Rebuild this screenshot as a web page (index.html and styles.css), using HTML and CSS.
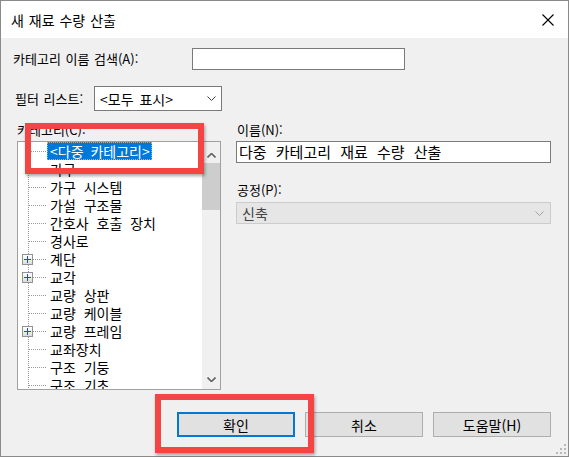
FILE: index.html
```html
<!DOCTYPE html>
<html lang="ko">
<head>
<meta charset="utf-8">
<title>새 재료 수량 산출</title>
<link rel="stylesheet" href="styles.css">
</head>
<body>
<div class="window">
  <div class="titlebar">
    <span class="title">새 재료 수량 산출</span>
    <svg class="close" width="12" height="12" viewBox="0 0 12 12"><path d="M0.5 0.5 L11.5 11.5 M11.5 0.5 L0.5 11.5" stroke="#000" stroke-width="1.1" fill="none"/></svg>
  </div>
  <div class="content">
    <div class="search-row">
      <label class="search-label">카테고리 이름 검색(A):</label>
      <div class="textbox search-box"></div>
    </div>
    <div class="filter-row">
      <label class="filter-label">필터 리스트:</label>
      <div class="combo">
        <span class="combo-text">&lt;모두 표시&gt;</span>
        <svg class="chev" width="9" height="5" viewBox="0 0 9 5"><path d="M0.5 0.5 L4.5 4.5 L8.5 0.5" stroke="#444" stroke-width="1" fill="none"/></svg>
      </div>
    </div>
    <div class="main">
      <div class="left-col">
        <div class="field-label">카테고리(C):</div>
        <div class="tree">
          <ul class="tree-list">
            <li class="row first"><span class="gutter"></span><span class="item selected">&lt;다중 카테고리&gt;</span></li>
            <li class="row"><span class="gutter"></span><span class="item">가구</span></li>
            <li class="row"><span class="gutter"></span><span class="item">가구 시스템</span></li>
            <li class="row"><span class="gutter"></span><span class="item">가설 구조물</span></li>
            <li class="row"><span class="gutter"></span><span class="item">간호사 호출 장치</span></li>
            <li class="row"><span class="gutter"></span><span class="item">경사로</span></li>
            <li class="row"><span class="gutter"><span class="plus"></span></span><span class="item">계단</span></li>
            <li class="row"><span class="gutter"><span class="plus"></span></span><span class="item">교각</span></li>
            <li class="row"><span class="gutter"></span><span class="item">교량 상판</span></li>
            <li class="row"><span class="gutter"></span><span class="item">교량 케이블</span></li>
            <li class="row"><span class="gutter"><span class="plus"></span></span><span class="item">교량 프레임</span></li>
            <li class="row"><span class="gutter"></span><span class="item">교좌장치</span></li>
            <li class="row"><span class="gutter"></span><span class="item">구조 기둥</span></li>
            <li class="row"><span class="gutter"></span><span class="item">구조 기초</span></li>
          </ul>
          <div class="scrollbar">
            <div class="sb-btn"><svg width="9" height="5" viewBox="0 0 9 5"><path d="M0.5 4.5 L4.5 0.5 L8.5 4.5" stroke="#606060" stroke-width="1.6" fill="none"/></svg></div>
            <div class="sb-track"><div class="sb-thumb"></div></div>
            <div class="sb-btn"><svg width="9" height="5" viewBox="0 0 9 5"><path d="M0.5 0.5 L4.5 4.5 L8.5 0.5" stroke="#606060" stroke-width="1.6" fill="none"/></svg></div>
          </div>
        </div>
      </div>
      <div class="right-col">
        <div class="field-label">이름(N):</div>
        <div class="textbox name-box">다중 카테고리 재료 수량 산출</div>
        <div class="field-label phase-label">공정(P):</div>
        <div class="combo disabled">
          <span class="combo-text">신축</span>
          <svg class="chev" width="9" height="5" viewBox="0 0 9 5"><path d="M0.5 0.5 L4.5 4.5 L8.5 0.5" stroke="#a0a0a0" stroke-width="1" fill="none"/></svg>
        </div>
      </div>
    </div>
    <div class="buttons">
      <button class="btn default">확인</button>
      <button class="btn">취소</button>
      <button class="btn">도움말(H)</button>
    </div>
    <svg class="grip" width="11" height="11" viewBox="0 0 11 11">
      <rect x="8" y="0" width="2" height="2" fill="#b8b8b8"/>
      <rect x="4" y="4" width="2" height="2" fill="#b8b8b8"/>
      <rect x="8" y="4" width="2" height="2" fill="#b8b8b8"/>
      <rect x="0" y="8" width="2" height="2" fill="#b8b8b8"/>
      <rect x="4" y="8" width="2" height="2" fill="#b8b8b8"/>
      <rect x="8" y="8" width="2" height="2" fill="#b8b8b8"/>
    </svg>
  </div>
  <div class="highlight hl-tree"></div>
  <div class="highlight hl-ok"></div>
</div>
</body>
</html>
```

FILE: styles.css
```css
* { box-sizing: border-box; }
html, body { margin: 0; padding: 0; }
body {
  width: 569px;
  height: 457px;
  overflow: hidden;
  font-family: "Noto Sans CJK KR", "Noto Sans", sans-serif;
  color: #000;
}
.window {
  position: relative;
  width: 569px;
  height: 457px;
  border: 1px solid #8a8a8a;
  display: flex;
  flex-direction: column;
  background: #f0f0f0;
}
.titlebar {
  height: 37px;
  background: #fff;
  display: flex;
  align-items: center;
  justify-content: space-between;
  padding: 0 14px 0 10px;
}
.title {
  font-size: 14px;
  line-height: 16px;
  word-spacing: 1px;
  margin-top: 1px;
}
.close { display: block; margin-top: 1px; }

.content {
  position: relative;
  flex: 1;
  padding: 10px 16px 0 12px;
  font-size: 13px;
}
.search-row {
  display: flex;
  align-items: center;
  height: 22px;
}
.search-label {
  width: 179px;
  line-height: 16px;
  word-spacing: 1px;
}
.textbox {
  background: #fff;
  border: 1px solid #7a7a7a;
  height: 22px;
}
.search-box { width: 213px; }

.filter-row {
  display: flex;
  align-items: center;
  margin-top: 16px;
  margin-left: 2px;
  height: 25px;
}
.filter-label {
  width: 79px;
  line-height: 16px;
  word-spacing: 1px;
}
.combo {
  width: 128px;
  height: 25px;
  border: 1px solid #7a7a7a;
  background: #fff;
  display: flex;
  align-items: center;
  justify-content: space-between;
  padding: 0 5px 0 5px;
  font-size: 14px;
}
.combo-text { line-height: 16px; word-spacing: 2px; }
.chev { display: block; }

.main {
  display: grid;
  grid-template-columns: 204px 315px;
  column-gap: 15px;
  margin-top: 10px;
  margin-left: 4px;
}
.field-label {
  height: 20px;
  line-height: 16px;
  padding-top: 1px;
}
.tree {
  height: 249px;
  border: 1px solid #a0a0a0;
  background: #fff;
  display: flex;
}
.tree-list {
  list-style: none;
  margin: 0;
  padding: 0;
  flex: 1;
  overflow: hidden;
  font-size: 14px;
  background-image: repeating-linear-gradient(to bottom, #9a9a9a 0 1px, transparent 1px 2px);
  background-size: 1px 100%;
  background-position: 10px 9px;
  background-repeat: no-repeat;
}
.row {
  height: 18px;
  display: flex;
  align-items: center;
  white-space: nowrap;
}
.gutter {
  width: 29px;
  height: 18px;
  flex: none;
  display: flex;
  align-items: center;
  background-image: repeating-linear-gradient(to right, #9a9a9a 0 1px, transparent 1px 2px);
  background-size: 17px 1px;
  background-position: 11px 9px;
  background-repeat: no-repeat;
}
.plus {
  width: 11px;
  height: 11px;
  margin-left: 4px;
  border: 1px solid #929292;
  background:
    linear-gradient(#2a4d9c, #2a4d9c) center / 7px 1px no-repeat,
    linear-gradient(#2a4d9c, #2a4d9c) center / 1px 7px no-repeat,
    linear-gradient(#ffffff, #dcdcdc);
}
.item {
  line-height: 18px;
  height: 18px;
  padding: 0 2px 0 3px;
  word-spacing: 4px;
}
.item.selected {
  background: #0078d7;
  color: #fff;
  outline: 1px dotted #f5a04a;
  outline-offset: -1px;
  word-spacing: 3px;
}
.scrollbar {
  width: 18px;
  flex: none;
  background: #f0f0f0;
  display: flex;
  flex-direction: column;
}
.sb-btn {
  height: 18px;
  display: flex;
  align-items: center;
  justify-content: center;
}
.sb-btn:first-child { padding-top: 5px; height: 21px; }
.sb-btn:last-child { padding-bottom: 2px; }
.sb-track { flex: 1; }
.sb-thumb {
  height: 47px;
  background: #cdcdcd;
}

.right-col .field-label { margin-left: 1px; }
.name-box {
  height: 22px;
  font-size: 15px;
  line-height: 20px;
  padding-left: 2px;
  word-spacing: 5px;
}
.phase-label { margin-top: 18px; }
.combo.disabled {
  width: 315px;
  height: 22px;
  margin-top: 1px;
  background: #e6e6e6;
  border-color: #cccccc;
  color: #444444;
  padding: 0 6px 0 5px;
}

.buttons {
  display: flex;
  justify-content: flex-end;
  gap: 10px;
  margin-top: 22px;
  margin-left: 4px;
  width: 534px;
}
.btn {
  width: 118px;
  height: 25px;
  background: #e1e1e1;
  border: 1px solid #adadad;
  font-family: "Noto Sans CJK KR", "Noto Sans", sans-serif;
  font-size: 14px;
  color: #000;
  padding: 0;
  word-spacing: 1px;
}
.btn.default { border: 2px solid #0078d7; }

.grip {
  position: absolute;
  right: 1px;
  bottom: 1px;
}

.highlight {
  position: absolute;
  border: 6px solid #f44444;
  box-shadow: 1px 2px 3px rgba(0, 0, 0, 0.35);
}
.hl-tree { left: 24px; top: 122px; width: 179px; height: 51px; }
.hl-ok { left: 154px; top: 393px; width: 159px; height: 59px; }
```
